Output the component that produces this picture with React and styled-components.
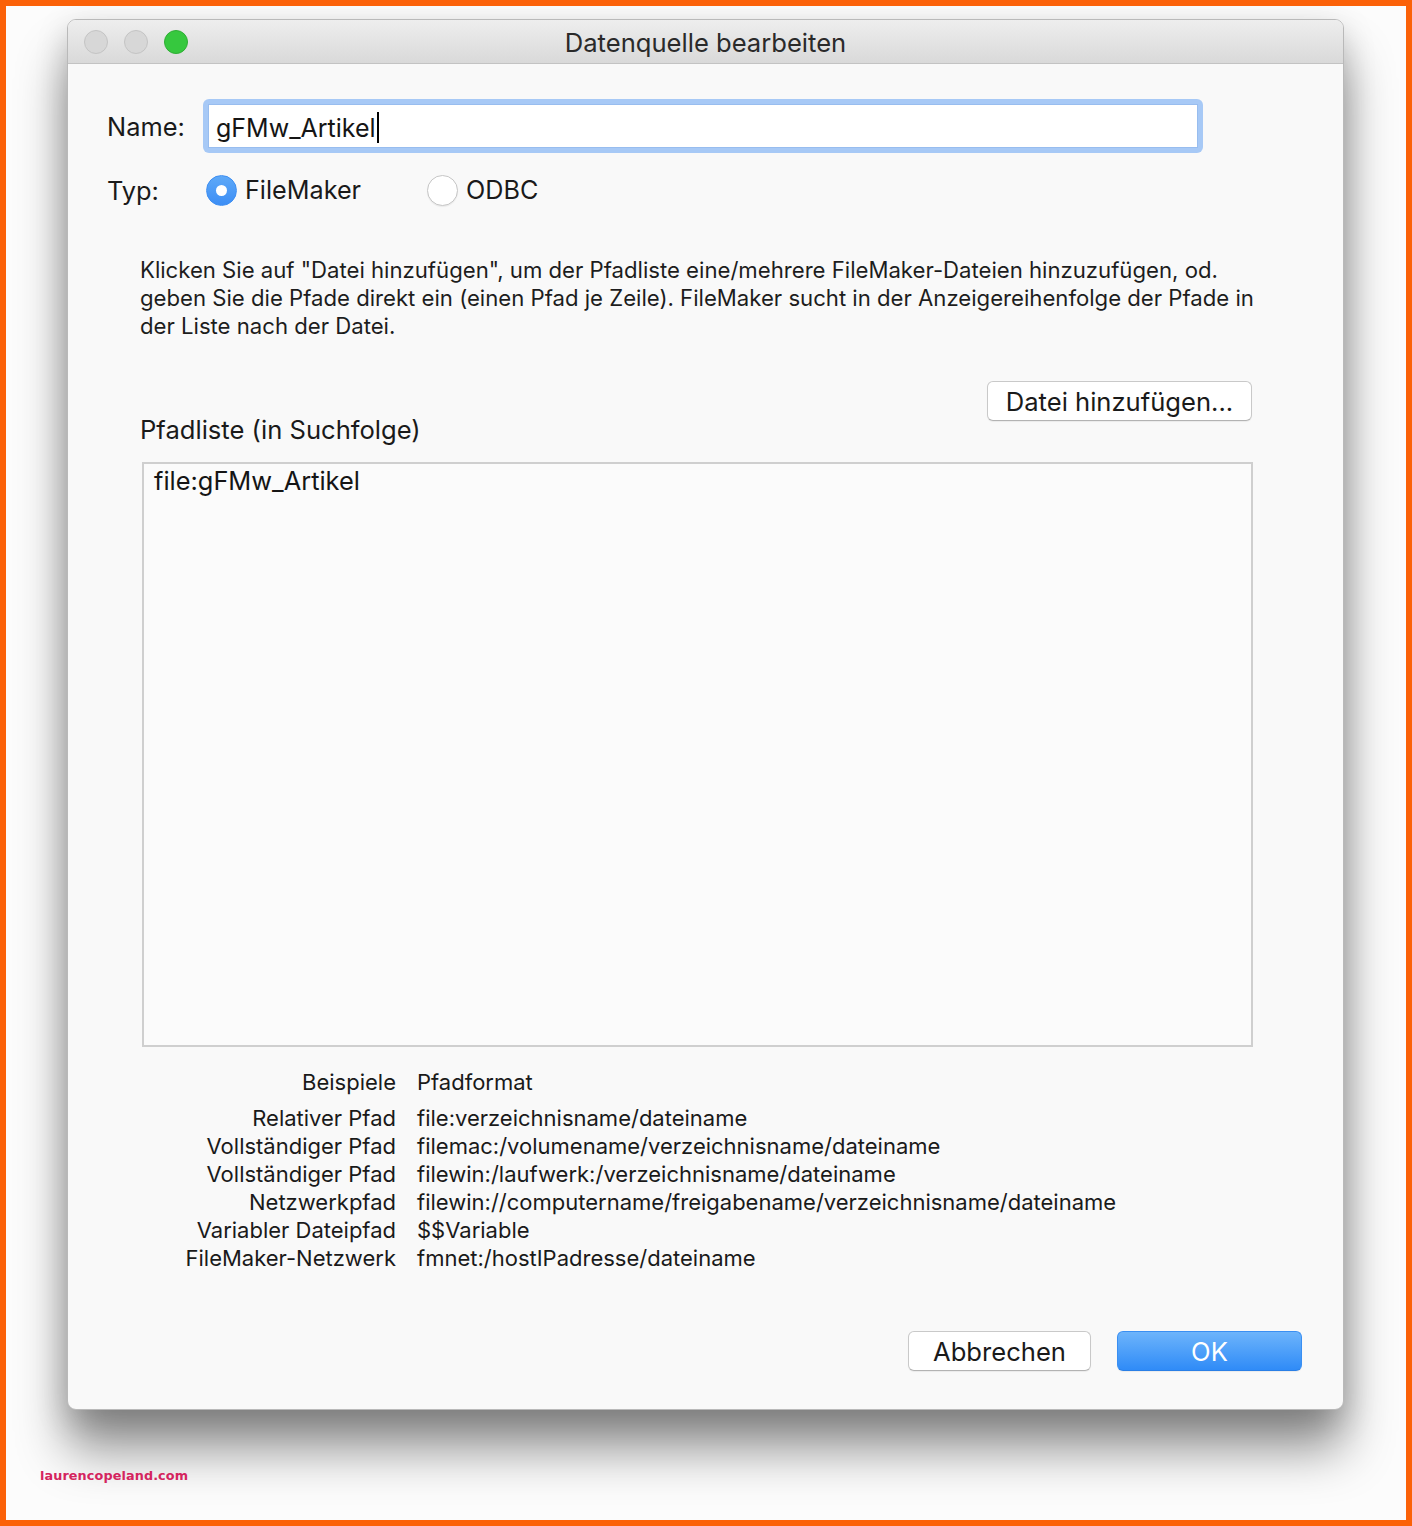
import React from "react";
import styled, { createGlobalStyle } from "styled-components";

const Global = createGlobalStyle`
  html, body { margin: 0; padding: 0; background: #fcfcfc; }
  * { box-sizing: border-box; }
  body { font-family: Inter, "Liberation Sans", Arial, sans-serif; color: #1d1d1d; }
`;

const Frame = styled.div`
  width: 1412px;
  height: 1526px;
  border: 6px solid #fb6108;
  background: #fcfcfc;
  padding-top: 13px;
  display: flex;
  flex-direction: column;
  overflow: hidden;
`;

const Window = styled.div`
  margin-left: 61px;
  width: 1277px;
  height: 1391px;
  border-radius: 9px;
  background: #f9f9f9;
  border: 1px solid #b9b9b9;
  box-shadow: 0 40px 50px rgba(0, 0, 0, 0.42), 0 10px 32px rgba(0, 0, 0, 0.18);
  display: flex;
  flex-direction: column;
  overflow: hidden;
`;

const TitleBar = styled.div`
  height: 44px;
  flex: none;
  display: grid;
  grid-template-columns: 1fr auto 1fr;
  align-items: center;
  background: linear-gradient(#eeeeee, #d9d9d9);
  border-bottom: 1px solid #c3c3c3;
  padding: 0 16px;
`;

const Lights = styled.div`
  display: flex;
  gap: 16px;
`;

const Light = styled.span`
  width: 24px;
  height: 24px;
  border-radius: 50%;
  background: ${(p) => (p.$green ? "#36c83e" : "#d7d7d7")};
  border: 1px solid ${(p) => (p.$green ? "#2fae35" : "#c4c4c4")};
`;

const Title = styled.div`
  font-size: 25.6px;
  color: #2a2a2a;
  padding-top: 2px;
`;

const Body = styled.div`
  flex: 1;
  display: flex;
  flex-direction: column;
  padding: 35px 40px 0 39px;
`;

const FieldRow = styled.div`
  display: flex;
  align-items: center;
  height: ${(p) => p.$h}px;
  margin-top: ${(p) => p.$mt || 0}px;
`;

const Label = styled.div`
  width: 96px;
  font-size: 25.4px;
  color: #1a1a1a;
`;

const FocusRing = styled.div`
  width: 1000px;
  height: 54px;
  border-radius: 6px;
  background: #a7c9f6;
  padding: 5px;
`;

const Input = styled.div`
  height: 100%;
  background: #ffffff;
  border: 1px solid #98bdef;
  display: flex;
  align-items: center;
  padding-left: 7px;
  padding-top: 3px;
  font-size: 25px;
  color: #151515;
`;

const Caret = styled.span`
  display: inline-block;
  width: 2px;
  height: 31px;
  background: #000;
  margin-left: 1px;
`;

const Radios = styled.div`
  display: flex;
  align-items: center;
  gap: 66px;
  margin-left: 3px;
`;

const RadioOption = styled.div`
  display: flex;
  align-items: center;
  gap: 8px;
  font-size: 25.2px;
  color: #1a1a1a;
`;

const RadioCircle = styled.span`
  width: 31px;
  height: 31px;
  border-radius: 50%;
  display: flex;
  align-items: center;
  justify-content: center;
  background: ${(p) => (p.$on ? "linear-gradient(#5ea9f8, #3d8ef5)" : "#ffffff")};
  border: 1px solid ${(p) => (p.$on ? "#3f8ff2" : "#c6c6c6")};
  box-shadow: ${(p) => (p.$on ? "none" : "0 1px 1px rgba(0,0,0,0.06)")};
  &::after {
    content: "";
    display: ${(p) => (p.$on ? "block" : "none")};
    width: 11px;
    height: 11px;
    border-radius: 50%;
    background: #fff;
  }
`;

const Description = styled.p`
  margin: 49px 0 0 33px;
  font-size: 22.15px;
  line-height: 28px;
  color: #1d1d1d;
  white-space: nowrap;
`;

const ListHeader = styled.div`
  display: flex;
  justify-content: space-between;
  align-items: flex-end;
  height: 65px;
  margin: 41px 51px 0 33px;
`;

const SectionTitle = styled.div`
  font-size: 25.6px;
  line-height: 32px;
  color: #1a1a1a;
`;

const Button = styled.button`
  align-self: ${(p) => (p.$top ? "flex-start" : "auto")};
  width: ${(p) => p.$w}px;
  height: 40px;
  border-radius: 6px;
  font-family: inherit;
  font-size: 25.6px;
  color: ${(p) => (p.$primary ? "#ffffff" : "#1a1a1a")};
  background: ${(p) =>
    p.$primary ? "linear-gradient(#6db4fb, #2f8bf7)" : "#ffffff"};
  border: 1px solid ${(p) => (p.$primary ? "#3a8ff2" : "#c9c9c9")};
  border-bottom-color: ${(p) => (p.$primary ? "#2a7fe6" : "#b3b3b3")};
  box-shadow: 0 1px 1px rgba(0, 0, 0, 0.06);
  padding: 0;
  cursor: default;
`;

const PathList = styled.div`
  margin: 16px 50px 0 35px;
  height: 585px;
  background: #fbfbfb;
  border: 2px solid #cfcfcf;
  padding: 2px 10px;
  font-size: 25.4px;
  line-height: 30px;
  color: #151515;
`;

const Examples = styled.div`
  margin-top: 21px;
  display: grid;
  grid-template-columns: 289px auto;
  column-gap: 21px;
  font-size: 22px;
  line-height: 28px;
  color: #1a1a1a;
`;

const ExKey = styled.div`
  text-align: right;
  white-space: nowrap;
  margin-bottom: ${(p) => (p.$head ? 8 : 0)}px;
`;

const ExVal = styled.div`
  white-space: nowrap;
  margin-bottom: ${(p) => (p.$head ? 8 : 0)}px;
`;

const Footer = styled.div`
  margin-top: 59px;
  display: flex;
  justify-content: flex-end;
  gap: 26px;
  padding-right: 1px;
`;

const Watermark = styled.div`
  margin: 58px 0 0 34px;
  font-family: "DejaVu Sans", sans-serif;
  font-weight: bold;
  font-size: 12.8px;
  color: #d4245e;
  letter-spacing: 0.1px;
`;

const rows = [
  ["Relativer Pfad", "file:verzeichnisname/dateiname"],
  ["Vollständiger Pfad", "filemac:/volumename/verzeichnisname/dateiname"],
  ["Vollständiger Pfad", "filewin:/laufwerk:/verzeichnisname/dateiname"],
  ["Netzwerkpfad", "filewin://computername/freigabename/verzeichnisname/dateiname"],
  ["Variabler Dateipfad", "$$Variable"],
  ["FileMaker-Netzwerk", "fmnet:/hostIPadresse/dateiname"],
];

export default function App() {
  return (
    <>
      <Global />
      <Frame>
        <Window>
          <TitleBar>
            <Lights>
              <Light />
              <Light />
              <Light $green />
            </Lights>
            <Title>Datenquelle bearbeiten</Title>
            <div />
          </TitleBar>
          <Body>
            <FieldRow $h={54}>
              <Label>Name:</Label>
              <FocusRing>
                <Input>
                  gFMw_Artikel
                  <Caret />
                </Input>
              </FocusRing>
            </FieldRow>
            <FieldRow $h={34} $mt={20}>
              <Label>Typ:</Label>
              <Radios>
                <RadioOption>
                  <RadioCircle $on />
                  FileMaker
                </RadioOption>
                <RadioOption>
                  <RadioCircle />
                  ODBC
                </RadioOption>
              </Radios>
            </FieldRow>
            <Description>
              Klicken Sie auf "Datei hinzufügen", um der Pfadliste eine/mehrere FileMaker-Dateien hinzuzufügen, od.
              <br />
              geben Sie die Pfade direkt ein (einen Pfad je Zeile). FileMaker sucht in der Anzeigereihenfolge der Pfade in
              <br />
              der Liste nach der Datei.
            </Description>
            <ListHeader>
              <SectionTitle>Pfadliste (in Suchfolge)</SectionTitle>
              <Button $top $w={265}>Datei hinzufügen...</Button>
            </ListHeader>
            <PathList>file:gFMw_Artikel</PathList>
            <Examples>
              <ExKey $head>Beispiele</ExKey>
              <ExVal $head>Pfadformat</ExVal>
              {rows.map(([k, v], i) => (
                <React.Fragment key={i}>
                  <ExKey>{k}</ExKey>
                  <ExVal>{v}</ExVal>
                </React.Fragment>
              ))}
            </Examples>
            <Footer>
              <Button $w={183}>Abbrechen</Button>
              <Button $primary $w={185}>OK</Button>
            </Footer>
          </Body>
        </Window>
        <Watermark>laurencopeland.com</Watermark>
      </Frame>
    </>
  );
}
